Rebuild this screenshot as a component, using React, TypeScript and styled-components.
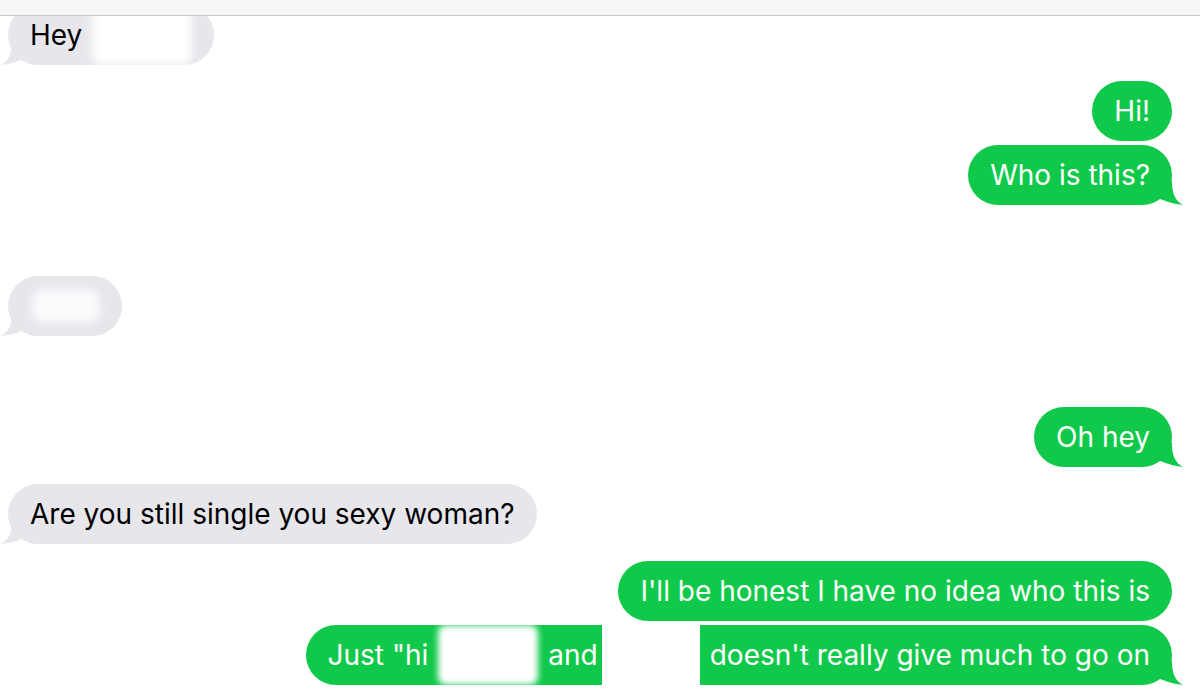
import styled, { createGlobalStyle } from 'styled-components';

const GlobalStyle = createGlobalStyle`
    html, body {
        margin: 0;
        padding: 0;
        background: #ffffff;
    }
    body {
        font-family: Inter, Roboto, "Liberation Sans", sans-serif;
        overflow: hidden;
    }
`;

type Side = 'in' | 'out';

const Tail = ({ side }: { side: Side }) => (
    <TailSvg side={side} width="24" height="24" viewBox="0 0 24 24">
        <path d="M0 0 H12 C12 11 14 19 23 24 C14 23 8 21 0 18 Z" />
    </TailSvg>
);

const App = () => {
    return (
        <>
            <GlobalStyle />
            <TopBar />
            <Thread>
                <Row side="in" gap={0}>
                    <Bubble side="in" tail>
                        Hey
                        <Smudge w={100} blur={5} />
                        <Tail side="in" />
                    </Bubble>
                </Row>

                <Row side="out" gap={16}>
                    <Bubble side="out">Hi!</Bubble>
                </Row>
                <Row side="out" gap={4}>
                    <Bubble side="out" tail>
                        Who is this?
                        <Tail side="out" />
                    </Bubble>
                </Row>

                <Row side="in" gap={71}>
                    <Bubble side="in" tail fixedWidth={114}>
                        <Haze />
                        <Tail side="in" />
                    </Bubble>
                </Row>

                <Row side="out" gap={71}>
                    <Bubble side="out" tail>
                        Oh hey
                        <Tail side="out" />
                    </Bubble>
                </Row>

                <Row side="in" gap={17}>
                    <Bubble side="in" tail>
                        Are you still single you sexy woman?
                        <Tail side="in" />
                    </Bubble>
                </Row>

                <Row side="out" gap={17}>
                    <Bubble side="out">I'll be honest I have no idea who this is</Bubble>
                </Row>
                <Row side="out" gap={4}>
                    <Bubble side="out" tail>
                        Just "hi
                        <Smudge w={100} blur={3} />
                        and
                        <Patch w={98} />
                        doesn't really give much to go on
                        <Tail side="out" />
                    </Bubble>
                </Row>
            </Thread>
        </>
    );
};

const TopBar = styled.div`
    position: fixed;
    top: 0;
    left: 0;
    right: 0;
    height: 15px;
    background: #f7f7f7;
    border-bottom: 1px solid #c9c9cc;
    z-index: 5;
`;

const Thread = styled.div`
    display: flex;
    flex-direction: column;
    padding: 5px 28px 0 8px;
`;

const Row = styled.div<{ side: Side; gap: number }>`
    display: flex;
    justify-content: ${(p) => (p.side === 'out' ? 'flex-end' : 'flex-start')};
    margin-top: ${(p) => p.gap}px;
`;

const Bubble = styled.div<{ side: Side; tail?: boolean; fixedWidth?: number }>`
    position: relative;
    display: flex;
    align-items: center;
    gap: 10px;
    box-sizing: border-box;
    height: 60px;
    ${(p) => (p.fixedWidth ? `width: ${p.fixedWidth}px;` : '')}
    padding: 0 22px;
    border-radius: 30px;
    background: ${(p) => (p.side === 'out' ? '#10c94a' : '#e6e6eb')};
    color: ${(p) => (p.side === 'out' ? '#ffffff' : '#000000')};
    font-size: 28px;
    white-space: nowrap;
`;

const TailSvg = styled.svg<{ side: Side }>`
    position: absolute;
    bottom: 0;
    ${(p) => (p.side === 'out' ? 'right: -12px;' : 'left: -8px; transform: scaleX(-1);')}
    fill: ${(p) => (p.side === 'out' ? '#10c94a' : '#e6e6eb')};
    z-index: 0;
`;

const Smudge = styled.span<{ w: number; blur: number }>`
    display: inline-block;
    flex: none;
    width: ${(p) => p.w}px;
    height: 60px;
    background: #ffffff;
    border-radius: 8px;
    filter: blur(${(p) => p.blur}px);
    z-index: 1;
`;

const Patch = styled.span<{ w: number }>`
    display: inline-block;
    flex: none;
    width: ${(p) => p.w}px;
    height: 60px;
    margin-left: -6px;
    background: #ffffff;
    z-index: 1;
`;

const Haze = styled.span`
    display: block;
    width: 74px;
    height: 34px;
    margin-left: 2px;
    background: #fbfbfd;
    border-radius: 10px;
    filter: blur(5px);
`;

export default App;
